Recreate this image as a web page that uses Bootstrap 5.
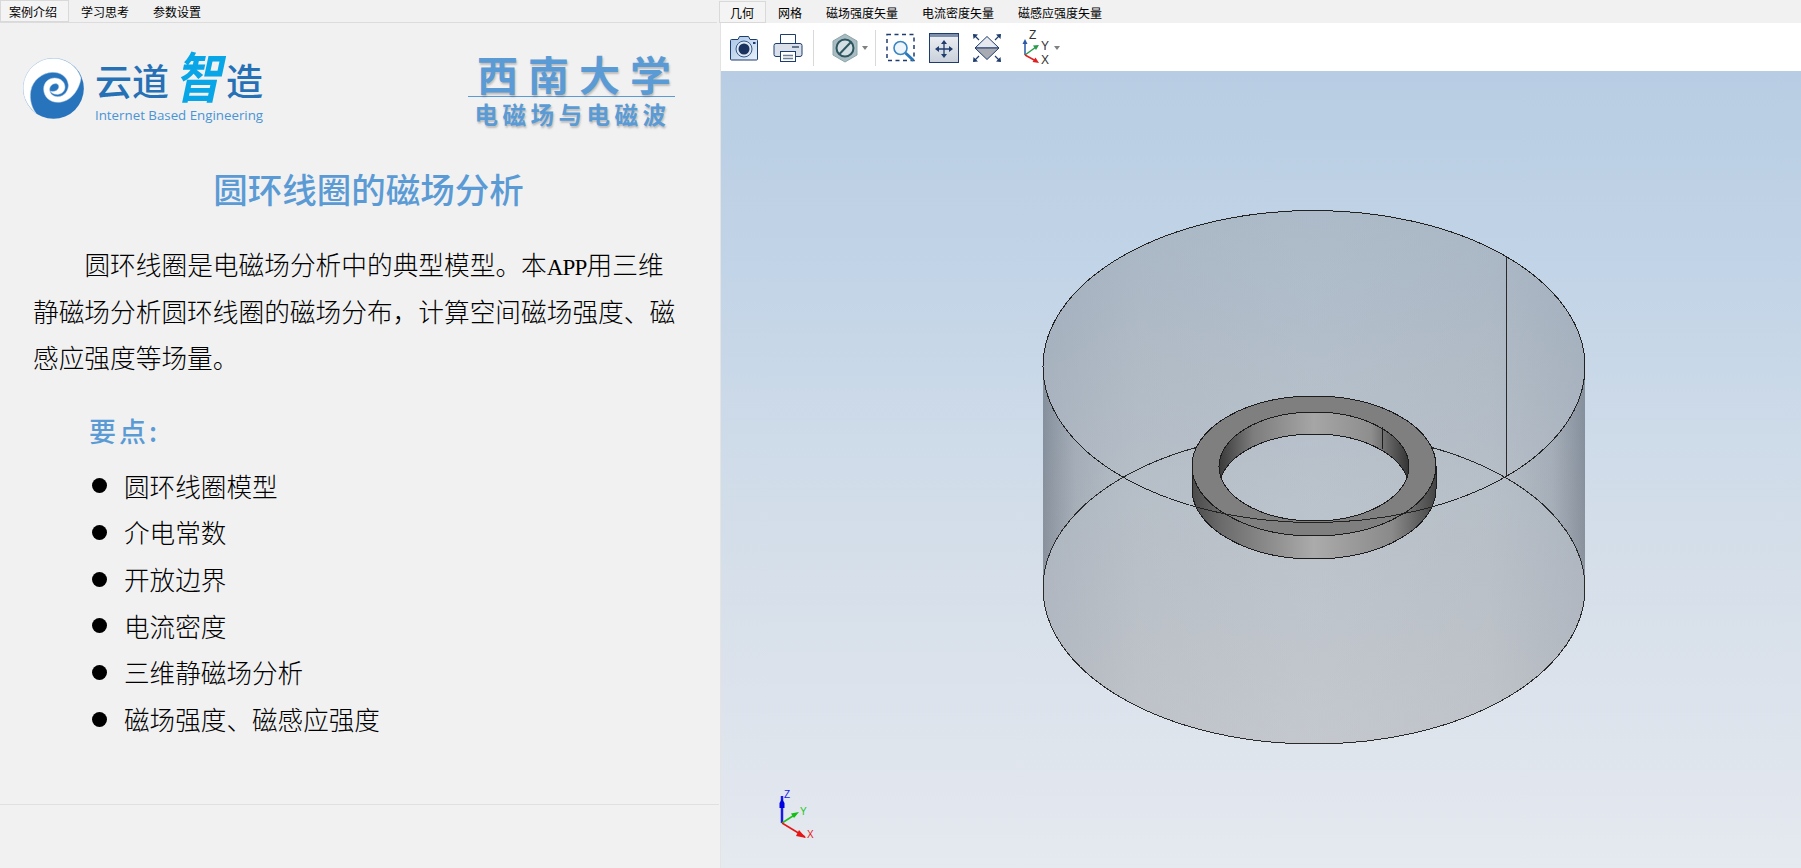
<!DOCTYPE html>
<html lang="zh-CN">
<head>
    <meta charset="UTF-8">
    <meta name="viewport" content="width=device-width, initial-scale=1.0">
    <title>圆环线圈的磁场分析</title>
    <link href="https://cdn.jsdelivr.net/npm/bootstrap@5.3.0/dist/css/bootstrap.min.css" rel="stylesheet">
    <style>
        body {
            background-color: #f1f1f1;
            color: #000;
            font-family: "Noto Sans CJK SC", "Liberation Sans", sans-serif;
            overflow: hidden;
        }
        .left-pane { width: 719px; flex: none; }
        .right-pane { flex: 1 1 auto; min-width: 0; }

        /* tabs */
        .tab-strip { height: 23px; border-bottom: 0; flex-wrap: nowrap; }
        .left-pane .tab-strip { border-bottom: 1px solid #dcdcdc; margin-right: 2px; }
        .tab-strip .nav-link {
            height: 22px;
            padding: 0 12px;
            margin: 0;
            font-size: 12px;
            line-height: 23px;
            color: #000;
            border: 0;
            border-radius: 0;
            background: transparent;
        }
        .left-pane .tab-strip .nav-item:first-child .nav-link { padding-left: 9px; }
        .right-pane .tab-strip { padding-top: 1px; }
        .right-pane .tab-strip .nav-link { line-height: 24px; }
        .right-pane .tab-strip .nav-item:first-child .nav-link { padding-left: 11px; }
        .tab-strip .nav-link.active {
            background: #f4f4f4;
            color: #000;
            box-shadow: inset 0 0 0 1px #d9d9d9;
        }

        /* left pane */
        .intro-body { flex: 1 1 auto; }
        .logo-row { height: 80px; margin-top: 26px; padding: 0 44px 0 23px; }
        .swirl { width: 61px; height: 61px; margin-top: 9px; margin-right: 11px; flex: none; }
        .brand-cn { height: 54px; color: #2670b5; font-size: 37px; line-height: 62px; font-weight: 500; white-space: nowrap; }
        .brand-zhi {
            display: inline-block;
            color: #08a6e6;
            font-size: 46px;
            line-height: 54px;
            font-weight: 700;
            font-style: italic;
            margin: 0 5px 0 6px;
            vertical-align: top;
            transform: translateY(-2px) scaleY(1.18);
        }
        .brand-en {
            font-family: "Open Sans", "Liberation Sans", sans-serif;
            font-size: 13.3px;
            line-height: 20px;
            margin-top: 2px;
            color: #4a94d6;
            white-space: nowrap;
        }
        .uni-logo { width: 207px; color: #5b9bd5; text-shadow: 1px 2px 2px rgba(90, 90, 90, .35); text-align: center; white-space: nowrap; }
        .uni-name { font-size: 41px; line-height: 42px; font-weight: 700; letter-spacing: 10px; margin-top: 3px; padding-left: 9px; border-bottom: 1px solid #5b9bd5; height: 45px; }
        .uni-sub { font-size: 23.500px; line-height: 34px; font-weight: 700; letter-spacing: 4.500px; padding-left: 2px; }

        .intro-title { font-size: 34.500px; line-height: 50px; font-weight: 500; color: #5b9bd5; text-align: center; margin: 34px 0 0 0; padding: 0 68px 0 86px; white-space: nowrap; }
        .intro-text { font-size: 25.700px; font-weight: 300; margin: 28px 0 0 33px; white-space: nowrap; }
        .text-line { display: block; height: 46.500px; line-height: 46.500px; }
        .text-line.first-line { margin-left: 2em; }
        .narrow-latin { font-family: "Liberation Serif", serif; font-size: 23px; letter-spacing: -.8px; }
        .points-head { font-size: 27px; line-height: 40px; letter-spacing: 3px; font-weight: 500; color: #5b9bd5; margin: 30px 0 0 89px; }
        .point-list { margin: 12px 0 0 92px; padding: 0; list-style: none; }
        .point-list li { display: flex; align-items: center; height: 46.700px; font-size: 25.600px; font-weight: 300; white-space: nowrap; }
        .point-list li::before { content: ""; width: 15px; height: 15px; border-radius: 50%; background: #000; margin-right: 17px; flex: none; }
        .pane-foot { height: 64px; flex: none; border-top: 1px solid #e0e0e0; }

        /* right pane */
        .view-wrap { margin-left: 1px; border-left: 1px solid #e3e3e3; }
        .tool-strip { height: 48px; background: #fff; padding: 2px 0 0 8px; }
        .tool-strip svg { display: block; flex: none; }
        .tool-sep { width: 1px; height: 36px; background: #d9d9d9; }
        .tool-caret { width: 0; height: 0; border: 3px solid transparent; border-top: 4px solid #808080; border-bottom: 0; flex: none; }
        .scene { height: 797px; background: linear-gradient(#b8cde3 0%, #c2d4e7 25%, #d0dce9 50%, #dbe2eb 75%, #e5e9f0 100%); }
        .scene svg { display: block; }
        .triad-label { font-family: "Liberation Sans", sans-serif; font-size: 10px; }
        .tool-strip .triad-label { font-size: 12px; }
        .edge-line { shape-rendering: crispEdges; }
    </style>
</head>
<body>

<div class="d-flex vh-100">

    <!-- Left: case description -->
    <div class="left-pane d-flex flex-column">
        <ul class="nav nav-tabs tab-strip">
            <li class="nav-item"><a class="nav-link active" href="#">案例介绍</a></li>
            <li class="nav-item"><a class="nav-link" href="#">学习思考</a></li>
            <li class="nav-item"><a class="nav-link" href="#">参数设置</a></li>
        </ul>

        <div class="intro-body">
            <div class="logo-row d-flex justify-content-between">
                <div class="d-flex">
                    <svg class="swirl" viewBox="21 25 183 183">
                        <circle cx="112.5" cy="116.5" r="91" fill="#2874bc"/>
                        <path fill="#fff" stroke="#bcd4ea" stroke-width="1.5" d="M60 191C35 170 21.5 145 21.5 116.500C21.500 66 62 25.500 112.500 25.500C150 25.500 185 50 195 85C190 120 165 158 125 158C100 158 83 140 83 118C83 98 98 85 116 85C134 85 147 97 147 112C147 126 134 136 120 134C112 133 106 130 103 124C110 127 124 125 128 114C130 106 124 101 116 102C106 103 100 112 101 122C103 135 114 141 125 141C145 141 158 122 157 105C154 80 132 67 108 68C80 70 50 90 44 125C40 150 48 175 60 191Z"/>
                    </svg>
                    <div>
                        <div class="brand-cn">云道<span class="brand-zhi">智</span>造</div>
                        <div class="brand-en">Internet Based Engineering</div>
                    </div>
                </div>
                <div class="uni-logo">
                    <div class="uni-name">西南大学</div>
                    <div class="uni-sub">电磁场与电磁波</div>
                </div>
            </div>

            <h1 class="intro-title">圆环线圈的磁场分析</h1>

            <p class="intro-text">
                <span class="text-line first-line">圆环线圈是电磁场分析中的典型模型。本<span class="narrow-latin">APP</span>用三维</span>
                <span class="text-line">静磁场分析圆环线圈的磁场分布，计算空间磁场强度、磁</span>
                <span class="text-line">感应强度等场量。</span>
            </p>

            <div class="points-head">要点:</div>
            <ul class="point-list">
                <li>圆环线圈模型</li>
                <li>介电常数</li>
                <li>开放边界</li>
                <li>电流密度</li>
                <li>三维静磁场分析</li>
                <li>磁场强度、磁感应强度</li>
            </ul>
        </div>

        <div class="pane-foot"></div>
    </div>

    <!-- Right: 3D view -->
    <div class="right-pane d-flex flex-column">
        <ul class="nav nav-tabs tab-strip">
            <li class="nav-item"><a class="nav-link active" href="#">几何</a></li>
            <li class="nav-item"><a class="nav-link" href="#">网格</a></li>
            <li class="nav-item"><a class="nav-link" href="#">磁场强度矢量</a></li>
            <li class="nav-item"><a class="nav-link" href="#">电流密度矢量</a></li>
            <li class="nav-item"><a class="nav-link" href="#">磁感应强度矢量</a></li>
        </ul>

        <div class="view-wrap flex-grow-1">
            <div class="tool-strip d-flex align-items-center">
                <!-- camera -->
                <svg width="30" height="30" viewBox="0 0 30 30">
                    <defs><linearGradient id="camFill" x1="0" y1="0" x2="1" y2="1"><stop offset="0" stop-color="#a9c6e6"/><stop offset="1" stop-color="#e8f0f8"/></linearGradient></defs>
                    <path d="M1.500 7.500Q1.500 6.500 2.500 6.500H9L10.500 3.500H19.500L21 6.500H27.500Q28.500 6.500 28.500 7.500V26Q28.500 27 27.500 27H2.500Q1.500 27 1.500 26Z" fill="url(#camFill)" stroke="#1f3c70"/>
                    <circle cx="15" cy="16" r="8" fill="#dfe8f2" stroke="#33598f"/>
                    <circle cx="15" cy="16" r="5.500" fill="#1b3260"/>
                    <rect x="24" y="9" width="2.500" height="2" fill="#1f3c70"/>
                </svg>
                <!-- printer -->
                <svg width="30" height="30" viewBox="0 0 30 30" style="margin-left:14px">
                    <path d="M7.500 12V1.500H22.500V12" fill="#fff" stroke="#1f3c70"/>
                    <rect x="1" y="10.500" width="28" height="13" rx="2" fill="#d9e0ea" stroke="#1f3c70"/>
                    <rect x="19" y="13" width="7" height="2" fill="#66758c"/>
                    <rect x="7.500" y="18.500" width="15" height="10" fill="#fff" stroke="#1f3c70"/>
                    <path d="M10 22.500H20M10 25.500H20" stroke="#6d7f99" stroke-width="1.500"/>
                </svg>
                <div class="tool-sep" style="margin-left:10px"></div>
                <!-- hidden toggle -->
                <svg width="26" height="30" viewBox="0 0 26 30" style="margin-left:18px">
                    <path d="M13 1L25 8V22L13 29L1 22V8Z" fill="#a8bcc2" stroke="#8fa5ab"/>
                    <circle cx="13" cy="15" r="8.500" fill="#d3dfe2" stroke="#2f5660" stroke-width="2"/>
                    <path d="M7.500 21L19 9" stroke="#2f5660" stroke-width="2"/>
                </svg>
                <div class="tool-caret" style="margin-left:4px"></div>
                <div class="tool-sep" style="margin-left:7px"></div>
                <!-- zoom window -->
                <svg width="31" height="30" viewBox="0 0 31 30" style="margin-left:10px">
                    <rect x="1" y="1.500" width="27" height="26" fill="none" stroke="#1f3c70" stroke-width="1.500" stroke-dasharray="4 3.500"/>
                    <circle cx="14.500" cy="15" r="6.500" fill="#eef5fb" stroke="#3a86c4" stroke-width="1.600"/>
                    <path d="M19.500 20L27.500 27.500" stroke="#2a78b8" stroke-width="3"/>
                </svg>
                <!-- zoom fit -->
                <svg width="30" height="30" viewBox="0 0 30 30" style="margin-left:12px">
                    <defs><linearGradient id="fitFill" x1="0" y1="0" x2="0" y2="1"><stop offset="0" stop-color="#eef1f5"/><stop offset="1" stop-color="#c9d0da"/></linearGradient></defs>
                    <rect x="0.500" y="0.500" width="29" height="29" fill="url(#fitFill)" stroke="#1f3c70"/>
                    <rect x="1" y="1" width="28" height="3" fill="#7b8eaa"/>
                    <path d="M15 9V23M8 16H22" stroke="#1f3c70" stroke-width="1.300"/>
                    <path d="M15 7L12 11H18ZM15 25L12 21H18ZM6 16L10 13V19ZM24 16L20 13V19Z" fill="#1f3c70"/>
                </svg>
                <!-- isometric -->
                <svg width="30" height="30" viewBox="0 0 30 30" style="margin-left:13px">
                    <path d="M15 3.500L27 15H3Z" fill="#e6e9ee" stroke="#1f3c70"/>
                    <path d="M3 15H27L15 26.500Z" fill="#a8acb2" stroke="#1f3c70"/>
                    <path d="M1 1L6 1.500L1.500 6ZM29 1L24 1.500L28.500 6ZM1 29L6 28.500L1.500 24ZM29 29L24 28.500L28.500 24Z" fill="#1f3c70"/>
                    <path d="M2 2L7 7M28 2L23 7M2 28L7 23M28 28L23 23" stroke="#1f3c70" stroke-width="1.200"/>
                </svg>
                <!-- triad -->
                <svg width="30" height="40" viewBox="0 -4 30 40" style="margin-left:19px">
                    <path d="M4 23V10" stroke="#2a58a8" stroke-width="1.500"/>
                    <path d="M4 7L1.500 12H6.500Z" fill="#2a58a8"/>
                    <path d="M4 23L15 15" stroke="#2a9a4a" stroke-width="1.500"/>
                    <path d="M18 13L12 13.500L15 18Z" fill="#2a9a4a"/>
                    <path d="M4 23L15 29" stroke="#e02020" stroke-width="1.500"/>
                    <path d="M18 31L11.500 30L14.500 25.500Z" fill="#e02020"/>
                    <text class="triad-label" x="8" y="7" fill="#333">Z</text>
                    <text class="triad-label" x="20" y="18" fill="#333">Y</text>
                    <text class="triad-label" x="20" y="32" fill="#333">X</text>
                </svg>
                <div class="tool-caret" style="margin-left:3px"></div>
            </div>

            <div class="scene">
                <svg width="1080" height="797" viewBox="721 71 1080 797">
                    <defs>
                        <linearGradient id="bodyTint" gradientUnits="userSpaceOnUse" x1="1043" y1="0" x2="1585" y2="0">
                            <stop offset="0" stop-color="#70747c" stop-opacity=".38"/>
                            <stop offset=".18" stop-color="#7b7b7b" stop-opacity=".31"/>
                            <stop offset=".5" stop-color="#7b7b7b" stop-opacity=".27"/>
                            <stop offset=".82" stop-color="#7b7b7b" stop-opacity=".31"/>
                            <stop offset="1" stop-color="#70747c" stop-opacity=".38"/>
                        </linearGradient>
                        <linearGradient id="wallLeft" gradientUnits="userSpaceOnUse" x1="1043" y1="0" x2="1125" y2="0">
                            <stop offset="0" stop-color="#4a5562" stop-opacity=".38"/>
                            <stop offset=".4" stop-color="#5a6470" stop-opacity=".12"/>
                            <stop offset="1" stop-color="#5a6470" stop-opacity="0"/>
                        </linearGradient>
                        <linearGradient id="wallRight" gradientUnits="userSpaceOnUse" x1="1585" y1="0" x2="1503" y2="0">
                            <stop offset="0" stop-color="#4a5562" stop-opacity=".38"/>
                            <stop offset=".4" stop-color="#5a6470" stop-opacity=".12"/>
                            <stop offset="1" stop-color="#5a6470" stop-opacity="0"/>
                        </linearGradient>
                        <linearGradient id="ringOuter" gradientUnits="userSpaceOnUse" x1="1192" y1="0" x2="1436" y2="0">
                            <stop offset="0" stop-color="#4a4a4a"/>
                            <stop offset=".12" stop-color="#6b6b6b"/>
                            <stop offset=".5" stop-color="#ababab"/>
                            <stop offset=".82" stop-color="#8a8a8a"/>
                            <stop offset="1" stop-color="#444"/>
                        </linearGradient>
                        <linearGradient id="ringInner" gradientUnits="userSpaceOnUse" x1="1219" y1="0" x2="1409" y2="0">
                            <stop offset="0" stop-color="#3a3a3a"/>
                            <stop offset=".18" stop-color="#7d7d7d"/>
                            <stop offset=".5" stop-color="#a6a6a6"/>
                            <stop offset=".8" stop-color="#8e8e8e"/>
                            <stop offset="1" stop-color="#333"/>
                        </linearGradient>
                        <clipPath id="holeClip"><ellipse cx="1314" cy="466.500" rx="95" ry="54.500"/></clipPath>
                    </defs>

                    <!-- air domain -->
                    <path d="M1043 366A271 156 0 0 1 1585 366V588A271 156 0 0 1 1043 588Z" fill="url(#bodyTint)"/>
                    <path d="M1043 366.500V588A271 156 0 0 1 1123.500 477A271 156 0 0 1 1043 366.500Z" fill="url(#wallLeft)"/>
                    <path d="M1585 366.500V588A271 156 0 0 0 1504.500 477A271 156 0 0 0 1585 366.500Z" fill="url(#wallRight)"/>
                    <ellipse class="edge-line" cx="1314" cy="588" rx="271" ry="156" fill="none" stroke="#2a2a2a"/>
                    <path class="edge-line" d="M1506 256V477" stroke="#2a2a2a"/>

                    <!-- coil -->
                    <path class="edge-line" d="M1192 466A122 70 0 0 0 1436 466V489A122 70 0 0 1 1192 489Z" fill="url(#ringOuter)" stroke="#1c1c1c"/>
                    <path fill-rule="evenodd" d="M1192 466A122 70 0 0 1 1436 466A122 70 0 0 1 1192 466ZM1219 466.500A95 54.500 0 0 0 1409 466.500A95 54.500 0 0 0 1219 466.500Z" fill="#7f7f7f"/>
                    <ellipse class="edge-line" cx="1314" cy="466" rx="122" ry="70" fill="none" stroke="#1c1c1c"/>
                    <g clip-path="url(#holeClip)">
                        <path fill-rule="evenodd" d="M1200 390H1430V540H1200ZM1219 488.500A95 54.500 0 0 0 1409 488.500A95 54.500 0 0 0 1219 488.500Z" fill="url(#ringInner)"/>
                        <ellipse class="edge-line" cx="1314" cy="488.500" rx="95" ry="54.500" fill="none" stroke="#1c1c1c"/>
                    </g>
                    <ellipse class="edge-line" cx="1314" cy="466.500" rx="95" ry="54.500" fill="none" stroke="#1c1c1c"/>
                    <path class="edge-line" d="M1382 427V449" stroke="#1c1c1c"/>

                    <ellipse class="edge-line" cx="1314" cy="366.500" rx="271" ry="156" fill="none" stroke="#222"/>

                    <!-- corner triad -->
                    <path d="M782 823V796" stroke="#1a1ae6" stroke-width="2.500"/>
                    <path d="M779.500 808H784.500V803L782 799L779.500 803Z" fill="#0000e0"/>
                    <path d="M782 823L796 814" stroke="#1fc41f" stroke-width="1.500"/>
                    <path d="M799 812L791 813.500L794 818Z" fill="#12c012"/>
                    <path d="M782 823L805 837" stroke="#e81414" stroke-width="1.500"/>
                    <path d="M806 838L796 836L799 830Z" fill="#e81414"/>
                    <text class="triad-label" x="784" y="798" fill="#1a1ae6">Z</text>
                    <text class="triad-label" x="800" y="815" fill="#1fc41f">Y</text>
                    <text class="triad-label" x="807" y="838" fill="#e81414">X</text>
                </svg>
            </div>
        </div>
    </div>
</div>

</body>
</html>
